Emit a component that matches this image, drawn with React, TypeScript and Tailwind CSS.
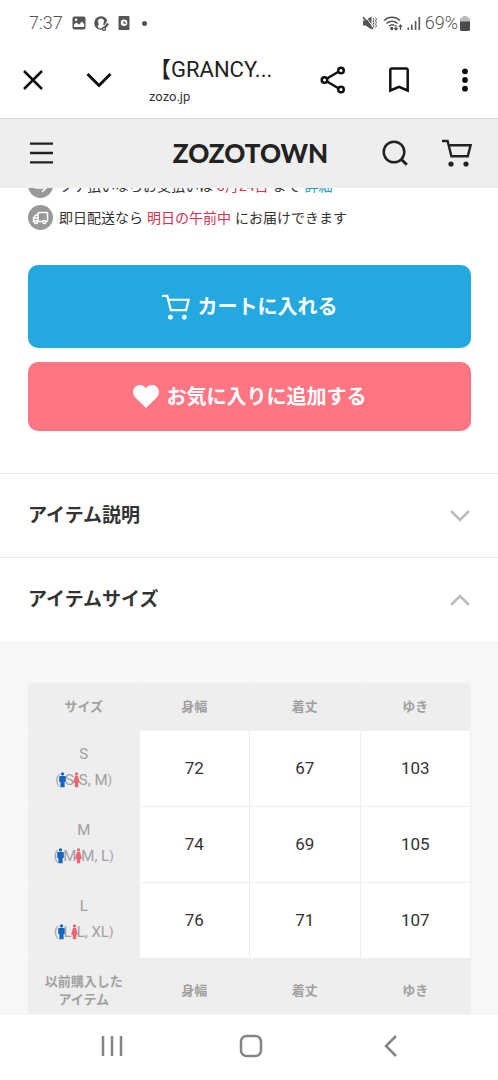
import { useState } from 'react'
import type { ReactNode } from 'react'
import clsx from 'clsx'

type SizeRow = {
  size: string
  men: string
  women: string
  values: number[]
}

const COLUMNS = ['身幅', '着丈', 'ゆき']

const SIZES: SizeRow[] = [
  { size: 'S', men: 'S', women: 'S, M', values: [72, 67, 103] },
  { size: 'M', men: 'M', women: 'M, L', values: [74, 69, 105] },
  { size: 'L', men: 'L', women: 'L, XL', values: [76, 71, 107] },
]

function CartIcon({ className }: { className?: string }) {
  return (
    <svg viewBox="0 0 30 28" className={className} fill="none" stroke="currentColor" strokeWidth="2.4" aria-hidden="true">
      <path d="M0 2h5.6L9.4 17.3h16.4L28.6 6.2H7" />
      <circle cx="9" cy="25" r="2.6" fill="currentColor" stroke="none" />
      <circle cx="24" cy="25" r="2.6" fill="currentColor" stroke="none" />
    </svg>
  )
}

function ManIcon() {
  return (
    <svg viewBox="0 0 7 16" className="-mx-px h-4 w-[7px] text-[#1464c0]" fill="currentColor" aria-hidden="true">
      <circle cx="3.5" cy="1.9" r="1.7" />
      <path d="M1 4h5a.8.8 0 0 1 .8.8V10H5.6v5.2H1.4V10H.2V4.8A.8.8 0 0 1 1 4z" />
    </svg>
  )
}

function WomanIcon() {
  return (
    <svg viewBox="0 0 7 16" className="-mx-px h-4 w-[7px] text-[#ee6470]" fill="currentColor" aria-hidden="true">
      <circle cx="3.5" cy="1.9" r="1.7" />
      <path d="M2 4h3l2 6.800H5.200V15.200H1.800V10.800H0z" />
    </svg>
  )
}

function StatusBar() {
  return (
    <div className="flex h-[42px] shrink-0 items-center justify-between pt-1 pl-[29px] pr-7 text-[#555]">
      <div className="flex items-center gap-2">
        <span className="text-[18px] leading-6 font-light">7:37</span>
        <svg viewBox="0 0 14 14" className="ml-px size-[14px]" fill="none" aria-hidden="true">
          <rect x="0.5" y="0.5" width="13" height="13" rx="2" fill="currentColor" />
          <path d="M2 11V8.500l2.500-2 2.500 2.300 2.800-3.300 2.400 2.500v3z" fill="#fff" />
          <circle cx="4" cy="3.7" r="1.3" fill="#fff" />
        </svg>
        <svg viewBox="0 0 15 15" className="size-[15px]" aria-hidden="true">
          <circle cx="7" cy="7" r="6.8" fill="currentColor" />
          <path d="M7 2.500c1.900 0 3 1.300 3 3 0 1.300-.6 2-1 2.700l1.500 1.300L8 12.300H5L3.500 10 5 8.200c-.5-.7-1-1.400-1-2.700 0-1.700 1.100-3 3-3z" fill="#fff" />
          <path d="M15 5.500l-5.500 9" stroke="#fff" strokeWidth="4" />
          <path d="M14 7.500l-3 4" stroke="currentColor" strokeWidth="2.2" />
          <circle cx="10" cy="13" r="1.5" fill="none" stroke="currentColor" strokeWidth="1.300" />
        </svg>
        <svg viewBox="0 0 12 14" className="ml-px h-[14px] w-3" fill="none" aria-hidden="true">
          <rect x="0.5" y="0" width="11" height="14" rx="1" fill="currentColor" />
          <circle cx="6" cy="6.8" r="3.3" fill="#fff" />
          <path d="M6 5v2.200h2" stroke="currentColor" strokeWidth="1.2" />
        </svg>
        <span className="ml-1 size-[5px] rounded-full bg-[#555]" />
      </div>
      <div className="flex items-center">
        <svg viewBox="0 0 14 14" className="size-[14px]" fill="currentColor" aria-hidden="true">
          <path d="M0 4.500h2.500L8.500 .5v13L2.500 9.500H0z" />
          <path d="M2 0l9 12" stroke="#fff" strokeWidth="1" />
          <path d="M0 1l10 12" stroke="currentColor" strokeWidth="1.5" />
          <path d="M10 2l1 1.500-1 1.500 1 1.700-1 1.600 1 1.600-1 1.600M12.500 1.500l1 1.500-1 1.700 1 1.700-1 1.700 1 1.700-1 1.700" fill="none" stroke="currentColor" strokeWidth="1" />
        </svg>
        <svg viewBox="0 0 20 15" className="ml-[6px] h-[15px] w-5" fill="none" stroke="currentColor" strokeWidth="1.5" aria-hidden="true">
          <path d="M1 4.500c4.500-4.300 11.500-4.300 16 0M3.500 7.500c3.200-3 7.800-3 11 0M6 10.200c1.800-1.600 4-1.600 5.500-.6" />
          <circle cx="8.8" cy="12.5" r="1" fill="currentColor" />
          <path d="M13 9v5m-1.800-1.800L13 14l1.800-1.800M17.500 14V9m-1.600 1.800L17.500 9l1.600 1.800" strokeWidth="1.2" />
        </svg>
        <svg viewBox="0 0 14 14" className="ml-1 size-[14px]" fill="currentColor" aria-hidden="true">
          <path d="M.5 11.500h1.600V14H.5zM4 8.500h1.600V14H4zM7.800 5h1.600v9H7.800zM11.500 1h1.600v13h-1.600z" />
        </svg>
        <span className="ml-1 text-[18px] leading-6 font-light">69%</span>
        <svg viewBox="0 0 10 15" className="ml-[2px] h-[15px] w-[10px]" aria-hidden="true">
          <path d="M3 0h4v1.500h1.500A1.500 1.500 0 0 1 10 3v3H0V3a1.500 1.500 0 0 1 1.500-1.500H3z" fill="#bbb" />
          <path d="M0 5.500h10v8a1.500 1.500 0 0 1-1.500 1.500h-7A1.500 1.500 0 0 1 0 13.500z" fill="#4a4a4a" />
        </svg>
      </div>
    </div>
  )
}

function BarButton({ label, children }: { label: string; children: ReactNode }) {
  return (
    <button type="button" aria-label={label} className="flex w-[66px] shrink-0 items-center justify-center">
      {children}
    </button>
  )
}

function BrowserBar() {
  return (
    <div className="flex h-[77px] shrink-0 border-b border-[#d9d9d9] text-[#111]">
      <BarButton label="閉じる">
        <svg viewBox="0 0 20 20" className="size-5" stroke="currentColor" strokeWidth="2.5" aria-hidden="true">
          <path d="M1 1l18 18M19 1L1 19" />
        </svg>
      </BarButton>
      <BarButton label="最小化">
        <svg viewBox="0 0 26 16" className="h-4 w-[26px]" fill="none" stroke="currentColor" strokeWidth="3" aria-hidden="true">
          <path d="M1.500 2L13 13.500 24.500 2" />
        </svg>
      </BarButton>
      <div className="min-w-0 flex-1 pt-[14px] pl-[17px]">
        <p className="text-[22px] leading-7 whitespace-nowrap text-[#222]">【GRANCY...</p>
        <p className="text-[13px] leading-[26px] text-[#333]">zozo.jp</p>
      </div>
      <BarButton label="共有">
        <svg viewBox="0 0 26 28" className="h-7 w-[26px]" fill="none" stroke="currentColor" strokeWidth="2.5" aria-hidden="true">
          <path d="M7 12.500L18 6M7 15.500L18 22" />
          <circle cx="4.5" cy="14" r="2.8" />
          <circle cx="21" cy="4.500" r="2.8" />
          <circle cx="21" cy="23.500" r="2.8" />
        </svg>
      </BarButton>
      <BarButton label="ブックマーク">
        <svg viewBox="0 0 20 26" className="h-[26px] w-5" fill="none" stroke="currentColor" strokeWidth="2.5" aria-hidden="true">
          <path d="M1.300 23.500V3a1.500 1.500 0 0 1 1.500-1.500h14.400A1.500 1.500 0 0 1 18.700 3v20.500L10 19.800z" />
        </svg>
      </BarButton>
      <BarButton label="メニュー">
        <svg viewBox="0 0 6 24" className="h-6 w-[6px]" fill="currentColor" aria-hidden="true">
          <circle cx="3" cy="3.3" r="2.9" />
          <circle cx="3" cy="12" r="2.9" />
          <circle cx="3" cy="20.7" r="2.9" />
        </svg>
      </BarButton>
    </div>
  )
}

function SiteHeader() {
  return (
    <header className="grid h-[69px] shrink-0 grid-cols-[1fr_auto_1fr] items-center bg-[#eee] pr-[26px] pb-[2px] pl-[29px] text-[#222]">
      <button type="button" aria-label="メニューを開く" className="justify-self-start">
        <svg viewBox="0 0 24 24" className="size-6" stroke="currentColor" strokeWidth="2.4" aria-hidden="true">
          <path d="M1 2.600h23M1 12h23M1 21.400h23" />
        </svg>
      </button>
      <a href="#" className="font-[Lato,sans-serif] text-[26px] leading-8 font-black">ZOZOTOWN</a>
      <div className="flex items-center justify-end gap-[34px]">
        <button type="button" aria-label="検索">
          <svg viewBox="0 0 26 26" className="size-[26px]" fill="none" stroke="currentColor" strokeWidth="2.5" aria-hidden="true">
            <circle cx="12" cy="12" r="10.3" />
            <path d="M19 19l5.800 5.800" strokeWidth="3" />
          </svg>
        </button>
        <button type="button" aria-label="カート">
          <CartIcon className="h-7 w-[30px]" />
        </button>
      </div>
    </header>
  )
}

function Notice({ icon, children }: { icon: ReactNode; children: ReactNode }) {
  return (
    <li className="flex h-[25px] items-center gap-[6px]">
      <span className="flex size-[25px] shrink-0 items-center justify-center rounded-full bg-[#999] text-white">{icon}</span>
      <p className="flex gap-1 text-[14px] leading-5 whitespace-nowrap">{children}</p>
    </li>
  )
}

function Notices() {
  return (
    <ul className="-mt-[15px] space-y-[7px]">
      <Notice
        icon={
          <svg viewBox="0 0 16 16" className="size-4" fill="none" stroke="currentColor" strokeWidth="1.5" aria-hidden="true">
            <path d="M2 5h9M2 10h11M9 14l4-4-4-4" />
          </svg>
        }
      >
        <span>ツケ払いならお支払いは</span>
        <span className="text-[#d6304e]">3月24日</span>
        <span>まで</span>
        <a href="#" className="text-[#1a9cc4]">詳細</a>
      </Notice>
      <Notice
        icon={
          <svg viewBox="0 0 17 14" className="h-[14px] w-[17px]" fill="none" stroke="currentColor" strokeWidth="1.5" aria-hidden="true">
            <path d="M6 10.500V2.500A1 1 0 0 1 7 1.500h7.500a1 1 0 0 1 1 1v7a1 1 0 0 1-1 1H14M10.500 10.500H6M6 4H3.800L1.500 7v3.500h.8M1.500 7H6" />
            <circle cx="4" cy="11" r="1.5" />
            <circle cx="12.3" cy="11" r="1.5" />
          </svg>
        }
      >
        <span>即日配送なら</span>
        <span className="text-[#d6304e]">明日の午前中</span>
        <span>にお届けできます</span>
      </Notice>
    </ul>
  )
}

function AccordionHeader({ title, open, onClick }: { title: string; open: boolean; onClick: () => void }) {
  return (
    <h2>
      <button
        type="button"
        aria-expanded={open}
        onClick={onClick}
        className="flex w-full items-center justify-between border-t border-[#ebebeb] bg-white px-7 pt-7 pb-[27px] text-left text-[19px] leading-7 font-bold"
      >
        {title}
        <svg
          viewBox="0 0 20 12"
          className={clsx('h-3 w-5 text-[#bbb]', open && 'rotate-180')}
          fill="none"
          stroke="currentColor"
          strokeWidth="2.5"
          aria-hidden="true"
        >
          <path d="M1 1l9 9 9-9" />
        </svg>
      </button>
    </h2>
  )
}

function HeadRow({ title }: { title: ReactNode }) {
  return (
    <tr className="bg-[#eee] text-[13px] leading-[18px] font-medium text-[#a0a0a0]">
      <th scope="col" className="border border-[#f1f1f1] py-[14px]">{title}</th>
      {COLUMNS.map(column => (
        <th key={column} scope="col" className="border border-[#f1f1f1] py-[14px]">{column}</th>
      ))}
    </tr>
  )
}

function SizeTable() {
  return (
    <table className="w-full table-fixed border-collapse text-center">
      <thead>
        <HeadRow title="サイズ" />
      </thead>
      <tbody>
        {SIZES.map(row => (
          <tr key={row.size} className="h-[76px]">
            <th scope="row" className="border border-[#f1f1f1] bg-[#eee] pb-1 text-[15px] leading-[26px] font-normal text-[#a0a0a0]">
              <p>{row.size}</p>
              <p className="flex items-center justify-center">
                <span className="text-[13px]">(</span>
                <ManIcon />
                <span>{row.men}</span>
                <WomanIcon />
                <span>{row.women}</span>
                <span className="text-[13px]">)</span>
              </p>
            </th>
            {row.values.map((value, i) => (
              <td key={COLUMNS[i]} className="border border-[#eee] bg-white text-[17px]">{value}</td>
            ))}
          </tr>
        ))}
        <HeadRow title={<>以前購入した<br />アイテム</>} />
      </tbody>
    </table>
  )
}

function NavBar() {
  return (
    <nav className="grid h-[66px] shrink-0 grid-cols-3 border-t border-[#f5f5f5] bg-white pr-[38px] pb-1 pl-[42px] text-[#858585]">
      <button type="button" aria-label="履歴" className="flex items-center justify-center">
        <svg viewBox="0 0 22 22" className="size-[22px]" stroke="currentColor" strokeWidth="2.5" aria-hidden="true">
          <path d="M2 1v20M11 1v20M20 1v20" />
        </svg>
      </button>
      <button type="button" aria-label="ホーム" className="flex items-center justify-center">
        <svg viewBox="0 0 24 24" className="size-6" fill="none" stroke="currentColor" strokeWidth="2.5" aria-hidden="true">
          <rect x="2" y="2" width="20" height="20" rx="5.5" />
        </svg>
      </button>
      <button type="button" aria-label="戻る" className="flex items-center justify-center">
        <svg viewBox="0 0 13 22" className="h-[22px] w-[13px]" fill="none" stroke="currentColor" strokeWidth="2.5" aria-hidden="true">
          <path d="M12 1L2 11l10 10" />
        </svg>
      </button>
    </nav>
  )
}

export default function App() {
  const [descriptionOpen, setDescriptionOpen] = useState(false)
  const [sizeOpen, setSizeOpen] = useState(true)

  return (
    <div className="flex h-screen flex-col overflow-hidden bg-white font-[Roboto,'Noto_Sans_CJK_JP',sans-serif] text-[#333]">
      <StatusBar />
      <BrowserBar />
      <SiteHeader />

      <main className="min-h-0 flex-1 overflow-hidden">
        <div className="pr-[27px] pb-[42px] pl-7">
          <Notices />

          {/* Purchase buttons */}
          <div className="mt-[35px] flex flex-col gap-[14px] text-[20px] font-bold text-white">
            <button type="button" className="flex h-[83px] items-center justify-center gap-2 rounded-[10px] bg-[#23a9df]">
              <CartIcon className="h-[26px] w-7" />
              カートに入れる
            </button>
            <button type="button" className="flex h-[69px] items-center justify-center gap-2 rounded-[10px] bg-[#ff7582]">
              <svg viewBox="0 0 26 23" className="h-[23px] w-[26px]" fill="currentColor" aria-hidden="true">
                <path d="M13 23L2.300 12.500C-.8 9.300-.6 4.600 2.200 1.900 5.200-1 10.300-.5 13 3.300 15.700-.5 20.800-1 23.800 1.900c2.800 2.700 3 7.400-.1 10.600z" />
              </svg>
              お気に入りに追加する
            </button>
          </div>
        </div>

        <AccordionHeader title="アイテム説明" open={descriptionOpen} onClick={() => setDescriptionOpen(!descriptionOpen)} />
        <AccordionHeader title="アイテムサイズ" open={sizeOpen} onClick={() => setSizeOpen(!sizeOpen)} />
        {sizeOpen && (
          <div className="bg-[#f7f7f7] pt-[42px] pr-[27px] pb-10 pl-7">
            <SizeTable />
          </div>
        )}
      </main>

      <NavBar />
    </div>
  )
}
